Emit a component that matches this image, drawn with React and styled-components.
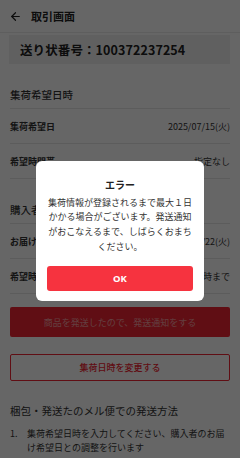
import React from "react";
import styled, { createGlobalStyle } from "styled-components";
import { ArrowLeft } from "lucide-react";

const GlobalStyle = createGlobalStyle`
  html, body { margin: 0; padding: 0; background: #ffffff; }
  body { font-family: "Noto Sans CJK JP", "Noto Sans", sans-serif; color: #222; }
  * { box-sizing: border-box; }
`;

const Page = styled.div`
  width: 240px;
  min-height: 458px;
  background: #ffffff;
  overflow: hidden;
`;

const Header = styled.header`
  height: 33px;
  display: flex;
  align-items: center;
  gap: 9px;
  padding: 0 9px;
  border-bottom: 1px solid #ececec;
`;

const HeaderTitle = styled.h1`
  margin: 0;
  font-size: 11px;
  font-weight: 700;
  color: #222;
`;

const TrackingBox = styled.div`
  margin: 2px 10px 0 9px;
  height: 29px;
  display: flex;
  align-items: center;
  padding: 0 11px;
  background: #f1f1f1;
  font-size: 12.5px;
  font-weight: 700;
  color: #222;
  letter-spacing: 0.1px;
`;

const Section = styled.section`
  padding: 0 10px;
`;

const SectionTitle = styled.h2`
  margin: 0;
  padding: 24px 0 6px;
  font-size: 10.5px;
  line-height: 14px;
  font-weight: 500;
  color: #333;
  border-bottom: 1px solid #e6e6e6;
`;

const Row = styled.div`
  height: 35px;
  display: flex;
  align-items: center;
  justify-content: space-between;
  border-bottom: 1px solid #e6e6e6;
  font-size: 9px;
  color: #333;
`;

const RowLabel = styled.span`
  font-weight: 700;
`;

const RowValue = styled.span`
  font-weight: 400;
`;

const PrimaryButton = styled.button`
  display: flex;
  align-items: center;
  justify-content: center;
  width: calc(100% - 20px);
  margin: 13px 10px 0;
  height: 30px;
  border: none;
  border-radius: 2px;
  background: #f02532;
  color: rgba(255, 255, 255, 0.55);
  font-family: inherit;
  font-size: 9px;
`;

const OutlineButton = styled.button`
  display: flex;
  align-items: center;
  justify-content: center;
  width: calc(100% - 20px);
  margin: 17px 10px 0;
  height: 27px;
  border: 1px solid #f02532;
  border-radius: 2px;
  background: #ffffff;
  color: #f02532;
  font-family: inherit;
  font-size: 9px;
  font-weight: 500;
`;

const MethodTitle = styled.h3`
  margin: 23px 10px 0;
  font-size: 10.5px;
  line-height: 14px;
  font-weight: 400;
  color: #333;
`;

const StepList = styled.ol`
  list-style: none;
  margin: 9px 10px 0;
  padding: 0;
`;

const Step = styled.li`
  display: grid;
  grid-template-columns: 17px 1fr;
  font-size: 9px;
  line-height: 14px;
  color: #333;
`;

const Overlay = styled.div`
  position: fixed;
  inset: 0;
  background: rgba(0, 0, 0, 0.6);
  display: flex;
  align-items: center;
  justify-content: center;
`;

const Modal = styled.div`
  width: 168px;
  background: #ffffff;
  border-radius: 6px;
  padding: 17px 11px 10px;
  margin-top: 4px;
`;

const ModalTitle = styled.h2`
  margin: 0;
  font-size: 10px;
  line-height: 14px;
  font-weight: 700;
  text-align: center;
  color: #222;
`;

const ModalBody = styled.p`
  margin: 4px 0 0;
  font-size: 9px;
  line-height: 14.7px;
  text-align: center;
  color: #333;
  white-space: nowrap;
`;

const OkButton = styled.button`
  display: flex;
  align-items: center;
  justify-content: center;
  width: 100%;
  height: 25px;
  margin-top: 12px;
  border: none;
  border-radius: 3px;
  background: #f6333f;
  color: #ffffff;
  font-family: "Noto Sans", sans-serif;
  font-size: 9.5px;
  font-weight: 700;
`;

export default function App() {
  return (
    <>
      <GlobalStyle />
      <Page>
        <Header>
          <ArrowLeft size={13} strokeWidth={2.2} color="#222" />
          <HeaderTitle>取引画面</HeaderTitle>
        </Header>
        <TrackingBox>送り状番号：100372237254</TrackingBox>

        <Section>
          <SectionTitle>集荷希望日時</SectionTitle>
          <Row>
            <RowLabel>集荷希望日</RowLabel>
            <RowValue>2025/07/15(火)</RowValue>
          </Row>
          <Row>
            <RowLabel>希望時間帯</RowLabel>
            <RowValue>指定なし</RowValue>
          </Row>
        </Section>

        <Section>
          <SectionTitle>購入者のお届け希望日時</SectionTitle>
          <Row>
            <RowLabel>お届け希望日</RowLabel>
            <RowValue>2025/07/22(火)</RowValue>
          </Row>
          <Row>
            <RowLabel>希望時間帯</RowLabel>
            <RowValue>午前中〜14時まで</RowValue>
          </Row>
        </Section>

        <PrimaryButton>商品を発送したので、発送通知をする</PrimaryButton>
        <OutlineButton>集荷日時を変更する</OutlineButton>

        <MethodTitle>梱包・発送たのメル便での発送方法</MethodTitle>
        <StepList>
          <Step>
            <span>1.</span>
            <span>集荷希望日時を入力してください、購入者のお届け希望日との調整を行います</span>
          </Step>
        </StepList>
      </Page>

      <Overlay>
        <Modal role="dialog">
          <ModalTitle>エラー</ModalTitle>
          <ModalBody>
            集荷情報が登録されるまで最大１日
            <br />
            かかる場合がございます。発送通知
            <br />
            がおこなえるまで、しばらくおまち
            <br />
            ください。
          </ModalBody>
          <OkButton>OK</OkButton>
        </Modal>
      </Overlay>
    </>
  );
}
